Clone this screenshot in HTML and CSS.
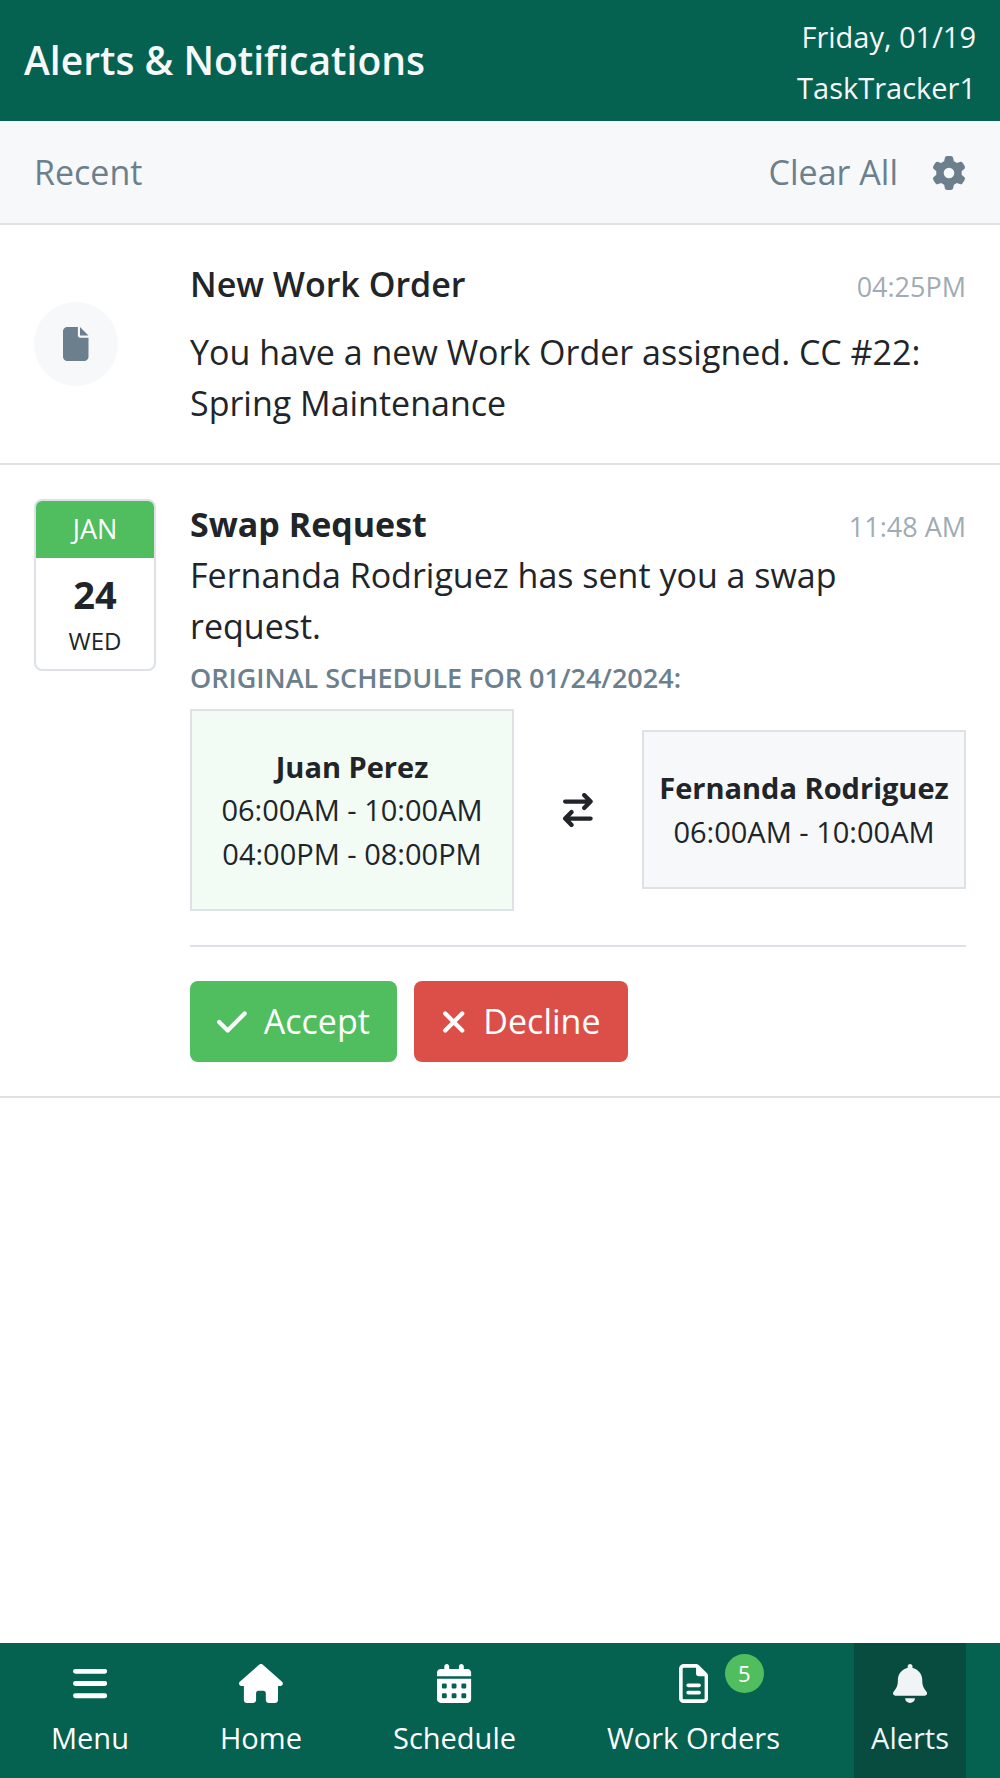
FILE: index.html
```html
<!DOCTYPE html>
<html lang="en">
<head>
  <meta charset="utf-8">
  <meta name="viewport" content="width=device-width, initial-scale=1">
  <title>Alerts &amp; Notifications</title>
  <link rel="stylesheet" href="styles.css">
</head>
<body>

  <header class="header">
    <h1>Alerts &amp; Notifications</h1>
    <div class="header-info">
      <p>Friday, 01/19</p>
      <p>TaskTracker1</p>
    </div>
  </header>

  <div class="toolbar">
    <h2>Recent</h2>
    <div class="toolbar-actions">
      <button type="button" class="link-btn">Clear All</button>
      <button type="button" class="link-btn" aria-label="Settings">
        <svg class="icon" viewBox="0 0 512 512"><path d="M495.9 166.6c3.2 8.7 .5 18.4-6.4 24.6l-43.3 39.4c1.1 8.3 1.7 16.8 1.7 25.4s-.6 17.1-1.7 25.4l43.3 39.4c6.9 6.2 9.6 15.9 6.4 24.6c-4.4 11.9-9.7 23.3-15.8 34.3l-4.7 8.1c-6.6 11-14 21.4-22.1 31.2c-5.9 7.2-15.7 9.6-24.5 6.8l-55.7-17.7c-13.4 10.3-28.2 18.9-44 25.4l-12.5 57.1c-2 9.1-9 16.3-18.2 17.8c-13.8 2.3-28 3.5-42.5 3.5s-28.7-1.2-42.5-3.5c-9.2-1.5-16.2-8.7-18.2-17.8l-12.5-57.1c-15.8-6.5-30.6-15.1-44-25.4L83.1 425.9c-8.8 2.8-18.6 .3-24.5-6.8c-8.1-9.8-15.5-20.2-22.1-31.2l-4.7-8.1c-6.1-11-11.4-22.4-15.8-34.3c-3.2-8.7-.5-18.4 6.4-24.6l43.3-39.4C64.6 273.1 64 264.6 64 256s.6-17.1 1.7-25.4L22.4 191.2c-6.9-6.2-9.6-15.9-6.4-24.6c4.4-11.9 9.7-23.3 15.8-34.3l4.7-8.1c6.6-11 14-21.4 22.1-31.2c5.9-7.2 15.7-9.6 24.5-6.8l55.7 17.7c13.4-10.3 28.2-18.9 44-25.4l12.5-57.1c2-9.1 9-16.3 18.2-17.8C227.3 1.2 241.5 0 256 0s28.7 1.2 42.5 3.5c9.2 1.5 16.2 8.7 18.2 17.8l12.5 57.1c15.8 6.5 30.6 15.1 44 25.4l55.7-17.7c8.8-2.8 18.6-.3 24.5 6.8c8.1 9.8 15.5 20.2 22.1 31.2l4.7 8.1c6.1 11 11.4 22.4 15.8 34.3zM256 336a80 80 0 1 0 0-160 80 80 0 1 0 0 160z"/></svg>
      </button>
    </div>
  </div>

  <main class="alerts">

    <article class="alert alert-center">
      <div class="alert-side">
        <div class="circle">
          <svg class="icon" viewBox="0 0 384 512"><path d="M0 64C0 28.7 28.7 0 64 0H224V128c0 17.7 14.3 32 32 32H384V448c0 35.3-28.7 64-64 64H64c-35.3 0-64-28.7-64-64V64zM256 128V0L384 128H256z"/></svg>
        </div>
      </div>
      <div class="alert-body">
        <div class="alert-head alert-head-space">
          <h3>New Work Order</h3>
          <time>04:25PM</time>
        </div>
        <p class="alert-text">You have a new Work Order assigned. CC #22: Spring Maintenance</p>
      </div>
    </article>

    <article class="alert">
      <div class="alert-side">
        <div class="date">
          <p class="date-month">JAN</p>
          <p class="date-day">24</p>
          <p class="date-week">WED</p>
        </div>
      </div>
      <div class="alert-body">
        <div class="alert-head">
          <h3 class="strong">Swap Request</h3>
          <time>11:48 AM</time>
        </div>
        <p class="alert-text">Fernanda Rodriguez has sent you a swap request.</p>
        <h4>ORIGINAL SCHEDULE FOR 01/24/2024:</h4>

        <div class="swap">
          <div class="shift shift-mine">
            <h5>Juan Perez</h5>
            <p>06:00AM - 10:00AM</p>
            <p>04:00PM - 08:00PM</p>
          </div>
          <svg class="icon stroke" viewBox="0 0 448 512"><path d="M32 128H416M320 32L416 128L320 224M416 384H32M128 288L32 384L128 480"/></svg>
          <div class="shift">
            <h5>Fernanda Rodriguez</h5>
            <p>06:00AM - 10:00AM</p>
          </div>
        </div>

        <div class="actions">
          <button type="button" class="btn btn-accept">
            <svg class="icon stroke" viewBox="0 0 448 512"><path d="M32 256L160 384L416 128"/></svg>
            Accept
          </button>
          <button type="button" class="btn btn-decline">
            <svg class="icon stroke" viewBox="0 0 384 512"><path d="M64 128L320 384M320 128L64 384"/></svg>
            Decline
          </button>
        </div>
      </div>
    </article>

  </main>

  <nav class="nav">
    <a href="#menu">
      <svg class="icon" viewBox="0 0 448 512"><path d="M32 64H416a32 32 0 0 1 0 64H32a32 32 0 0 1 0-64zM32 224H416a32 32 0 0 1 0 64H32a32 32 0 0 1 0-64zM32 384H416a32 32 0 0 1 0 64H32a32 32 0 0 1 0-64z"/></svg>
      Menu
    </a>
    <a href="#home">
      <svg class="icon" viewBox="0 0 576 512"><path d="M575.8 255.5c0 18-15 32.1-32 32.1h-32V472c0 22.1-17.9 40-40 40H392c-22.1 0-40-17.9-40-40V384c0-17.7-14.3-32-32-32H256c-17.7 0-32 14.3-32 32v88c0 22.1-17.9 40-40 40H104c-22.1 0-40-17.9-40-40V287.6H32c-18 0-32-14-32-32.1c0-9 3-17 10-24L266.4 8c7-7 15-8 22-8s15 2 21 7L564.8 231.5c8 7 12 15 11 24z"/></svg>
      Home
    </a>
    <a href="#schedule">
      <svg class="icon" viewBox="0 0 448 512"><path fill-rule="evenodd" d="M128 0c17.7 0 32 14.3 32 32V64H288V32c0-17.7 14.3-32 32-32s32 14.3 32 32V64h48c26.5 0 48 21.5 48 48v48H0V112C0 85.5 21.5 64 48 64H96V32c0-17.7 14.3-32 32-32zM0 192H448V464c0 26.5-21.5 48-48 48H48c-26.5 0-48-21.5-48-48V192zM80 256q-16 0-16 16v32q0 16 16 16h32q16 0 16-16v-32q0-16-16-16zM208 256q-16 0-16 16v32q0 16 16 16h32q16 0 16-16v-32q0-16-16-16zM336 256q-16 0-16 16v32q0 16 16 16h32q16 0 16-16v-32q0-16-16-16zM80 384q-16 0-16 16v32q0 16 16 16h32q16 0 16-16v-32q0-16-16-16zM208 384q-16 0-16 16v32q0 16 16 16h32q16 0 16-16v-32q0-16-16-16zM336 384q-16 0-16 16v32q0 16 16 16h32q16 0 16-16v-32q0-16-16-16z"/></svg>
      Schedule
    </a>
    <a href="#work-orders">
      <span class="icon-wrap">
        <svg class="icon" viewBox="0 0 384 512"><path fill-rule="evenodd" d="M64 0H220c17 0 33 7 45 19L365 119c12 12 19 28 19 45V448c0 35.3-28.7 64-64 64H64c-35.3 0-64-28.7-64-64V64C0 28.7 28.7 0 64 0zM64 48q-16 0-16 16V448q0 16 16 16H320q16 0 16-16V160H256c-17.7 0-32-14.3-32-32V48zM120 256H264a24 24 0 0 1 0 48H120a24 24 0 0 1 0-48zM120 352H264a24 24 0 0 1 0 48H120a24 24 0 0 1 0-48z"/></svg>
        <span class="badge">5</span>
      </span>
      Work Orders
    </a>
    <a href="#alerts" class="active" aria-current="page">
      <svg class="icon" viewBox="0 0 448 512"><path d="M256 32V51.2C329 66 384 130.6 384 208V226.8C384 273.9 401.3 319.2 432.5 354.4L439.9 362.7C448.3 372.2 450.4 385.6 445.2 397.1C440 408.6 428.6 416 416 416H32C19.4 416 8 408.6 2.8 397.1C-2.4 385.6-.3 372.2 8.1 362.7L15.5 354.4C46.7 319.2 64 273.9 64 226.8V208C64 130.6 118.1 66 192 51.2V32C192 14.3 206.3 0 224 0C241.7 0 256 14.3 256 32zM224 512c-17 0-33.3-6.7-45.3-18.7S160 465 160 448H288c0 17-6.7 33.3-18.7 45.3S241 512 224 512z"/></svg>
      Alerts
    </a>
  </nav>

</body>
</html>
```

FILE: styles.css
```css
/* reset */
*{margin:0; padding:0; box-sizing:border-box;}

body{
  display:flex;
  flex-direction:column;
  min-height:100vh;
  background-color:#fff;
  color:#212529;
  font-family:"Open Sans", sans-serif;
  font-size:34px;
  line-height:1.5;
}

button{font:inherit; border:0; cursor:pointer;}

/* icons follow the text size */
.icon{display:block; height:1em; fill:currentColor; flex:none;}
.stroke{fill:none; stroke:currentColor; stroke-width:64; stroke-linecap:round; stroke-linejoin:round;}

/* header */
.header{
  display:flex;
  justify-content:space-between;
  align-items:center;
  padding:7px 24px 8px;
  background-color:#056150;
  color:#f7f8fa;
}
.header h1{font-size:39px; font-weight:600;}
.header-info{padding-top:4px; font-size:29px; line-height:51px; text-align:right;}

/* toolbar */
.toolbar{
  display:flex;
  justify-content:space-between;
  align-items:center;
  padding:26px 34px 25px;
  border-bottom:2px solid #dee2e6;
  background-color:#f7f8fa;
  color:#6b808c;
}
.toolbar h2{font-size:34px; font-weight:400;}
.toolbar-actions{display:flex; align-items:center; gap:34px;}
.link-btn{background:none; color:inherit;}

/* alerts */
.alerts{flex:1;}
.alert{
  display:flex;
  gap:34px;
  padding:34px;
  border-bottom:2px solid #dee2e6;
}
.alert-center{align-items:center;}
.alert-side{width:122px; flex:none;}
.alert-body{flex:1;}
.alert-head{display:flex; justify-content:space-between; align-items:baseline;}
.alert-head-space{margin-bottom:17px;}
.alert-head h3{font-size:34px; font-weight:600;}
.alert-head .strong{font-weight:700;}
.alert-head time{font-size:27px; color:#a1abb3;}
.alert-body h4{
  margin:6px 0 10px;
  color:#6b808c;
  font-size:27px;
  font-weight:600;
}

.circle{
  display:flex;
  justify-content:center;
  align-items:center;
  width:84px;
  height:84px;
  border-radius:50%;
  background-color:#f7f8fa;
  color:#6b808c;
}

/* calendar card */
.date{
  overflow:hidden;
  padding-bottom:10px;
  border:2px solid #dee2e6;
  border-radius:8px;
  text-align:center;
}
.date-month{padding:8px 0; background-color:#50bd5f; color:#fff; font-size:27px;}
.date-day{margin-top:8px; font-size:38px; font-weight:700;}
.date-week{font-size:24px;}

/* swap */
.swap{
  display:flex;
  justify-content:space-between;
  align-items:center;
  padding-bottom:34px;
  border-bottom:2px solid #dee2e6;
}
.shift{
  min-width:324px;
  padding:34px 15px;
  border:2px solid #dee2e6;
  background-color:#f7f8fa;
  font-size:29px;
  text-align:center;
}
.shift-mine{background-color:#f2fcf4;}
.shift h5{font-size:29px; font-weight:700;}

.actions{display:flex; gap:17px; margin-top:34px;}
.btn{
  display:flex;
  align-items:center;
  gap:17px;
  padding:15px 27px;
  border-radius:8px;
  color:#fff;
}
.btn-accept{background-color:#50bd5f;}
.btn-decline{background-color:#dc4f49;}

/* bottom nav */
.nav{
  display:flex;
  justify-content:space-between;
  padding:0 34px;
  background-color:#056150;
}
.nav a{
  display:flex;
  flex-direction:column;
  align-items:center;
  gap:13px;
  padding:21px 17px 19px;
  color:#fff;
  font-size:29px;
  text-decoration:none;
}
.nav .icon{height:39px;}
.nav .active{background-color:#084c40; color:#f1f4f5;}
.icon-wrap{position:relative;}
.badge{
  position:absolute;
  top:-10px;
  left:46px;
  width:39px;
  height:39px;
  border-radius:50%;
  background-color:#50bd5f;
  font-size:22px;
  line-height:39px;
  text-align:center;
}
```
